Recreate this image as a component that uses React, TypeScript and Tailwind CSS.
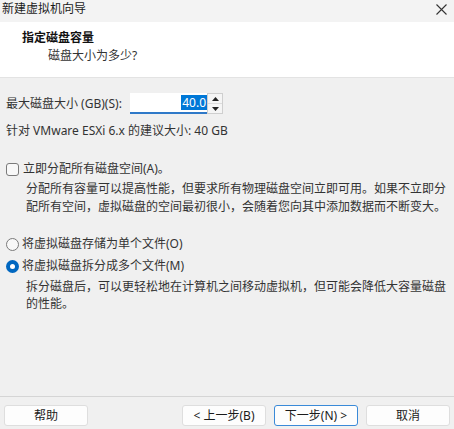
import React from "react";

const FONT = '"Noto Sans", "Noto Sans CJK SC", sans-serif';

function Btn({ children, primary }: { children: React.ReactNode; primary?: boolean }) {
  return (
    <div
      className={
        "w-[84px] h-[21px] flex items-center justify-center rounded-[3px] bg-[#fdfdfd] text-[12px] text-[#1b1b1b] border " +
        (primary ? "border-[#3a8ad8]" : "border-[#dedede]")
      }
    >
      {children}
    </div>
  );
}

export default function App() {
  return (
    <div className="w-[454px] h-[429px] bg-[#f0f0f0] flex flex-col text-[#1b1b1b] overflow-hidden" style={{ fontFamily: FONT }}>
      {/* title bar */}
      <div className="h-[22px] bg-[#f3f3f3] flex items-center justify-between pl-[2px] pr-[7px] shrink-0">
        <span className="text-[12px] leading-[16px] -mt-[4px]">新建虚拟机向导</span>
        <svg width="11" height="11" viewBox="0 0 11 11" className="-mt-[4px]">
          <path d="M0.5 0.5 L10.5 10.5 M10.5 0.5 L0.5 10.5" stroke="#333" strokeWidth="1.1" />
        </svg>
      </div>
      {/* header */}
      <div className="h-[56px] bg-white border-b border-[#e3e3e3] shrink-0 pl-[22px] pt-[29px]-0">
        <div className="pt-[8px] text-[12px] leading-[16px] font-bold text-[#111]">指定磁盘容量</div>
        <div className="pt-[2px] pl-[26px] text-[12px] leading-[16px] text-[#333]">磁盘大小为多少?</div>
      </div>
      {/* body */}
      <div className="flex-1 flex flex-col pl-[6px] text-[12px]">
        <div className="mt-[15px] h-[21px] flex items-center">
          <span className="w-[124px] leading-[16px] text-[#333]">最大磁盘大小 (GB)(S):</span>
          <div className="w-[77px] h-[21px] bg-white border-b-2 border-[#2f79c8] flex items-center justify-end">
            <span className="bg-[#0078d7] text-white leading-[15px] px-[1px] text-[12px]">40.0</span>
          </div>
          <div className="w-[16px] h-[21px] flex flex-col border border-[#cfcfcf] bg-[#f5f5f5]">
            <div className="flex-1 flex items-center justify-center border-b border-[#dcdcdc]">
              <svg width="7" height="4" viewBox="0 0 7 4"><path d="M3.5 0 L7 4 L0 4 Z" fill="#222" /></svg>
            </div>
            <div className="flex-1 flex items-center justify-center">
              <svg width="7" height="4" viewBox="0 0 7 4"><path d="M0 0 L7 0 L3.5 4 Z" fill="#222" /></svg>
            </div>
          </div>
        </div>
        <div className="mt-[9px] leading-[16px] text-[#333]">针对 VMware ESXi 6.x 的建议大小: 40 GB</div>

        <div className="mt-[22px] h-[16px] flex items-center">
          <div className="w-[13px] h-[13px] rounded-[3px] border border-[#7a7a7a] bg-[#f8f8f8]" />
          <span className="ml-[4px] leading-[16px] text-[#333]">立即分配所有磁盘空间(A)。</span>
        </div>
        <div className="mt-[3px] pl-[20px] leading-[18px] text-[#333]">
          <div>分配所有容量可以提高性能，但要求所有物理磁盘空间立即可用。如果不立即分</div>
          <div>配所有空间，虚拟磁盘的空间最初很小，会随着您向其中添加数据而不断变大。</div>
        </div>

        <div className="mt-[20px] h-[16px] flex items-center">
          <div className="w-[13px] h-[13px] rounded-full border border-[#7a7a7a] bg-[#f8f8f8]" />
          <span className="ml-[3px] leading-[16px] text-[#333]">将虚拟磁盘存储为单个文件(O)</span>
        </div>
        <div className="mt-[6px] h-[16px] flex items-center">
          <div className="w-[13px] h-[13px] rounded-full bg-[#0067c0] flex items-center justify-center">
            <div className="w-[5px] h-[5px] rounded-full bg-white" />
          </div>
          <span className="ml-[3px] leading-[16px] text-[#333]">将虚拟磁盘拆分成多个文件(M)</span>
        </div>
        <div className="mt-[4px] pl-[20px] leading-[17px] text-[#333]">
          <div>拆分磁盘后，可以更轻松地在计算机之间移动虚拟机，但可能会降低大容量磁盘</div>
          <div>的性能。</div>
        </div>
      </div>
      {/* footer */}
      <div className="h-[33px] shrink-0 border-t border-[#d5d5d5] pt-[8px] px-[4px] flex">
        <Btn>帮助</Btn>
        <div className="flex-1" />
        <div className="flex gap-[8px]">
          <Btn>&lt; 上一步(B)</Btn>
          <Btn primary>下一步(N) &gt;</Btn>
          <Btn>取消</Btn>
        </div>
      </div>
    </div>
  );
}
